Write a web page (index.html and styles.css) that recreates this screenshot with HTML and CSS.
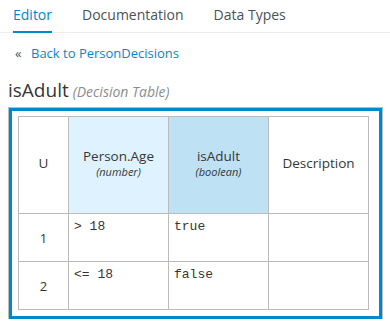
FILE: index.html
```html
<!DOCTYPE html>
<html lang="en">
<head>
    <meta charset="UTF-8">
    <title>isAdult - Decision Table</title>
    <link rel="stylesheet" href="styles.css">
</head>
<body>

<nav class="tabs">
    <a class="tab active">Editor</a>
    <a class="tab">Documentation</a>
    <a class="tab">Data Types</a>
</nav>

<div class="back">
    <span class="back-icon">&laquo;</span>
    <a class="back-link">Back to PersonDecisions</a>
</div>

<h2 class="title">isAdult <span class="kind">(Decision Table)</span></h2>

<div class="grid-box">
    <table class="dtable">
        <colgroup>
            <col class="w-num">
            <col class="w-col">
            <col class="w-col">
            <col class="w-col">
        </colgroup>
        <tr class="head">
            <th>U</th>
            <th class="input">Person.Age<small>(number)</small></th>
            <th class="output">isAdult<small>(boolean)</small></th>
            <th>Description</th>
        </tr>
        <tr>
            <td class="num">1</td>
            <td>&gt; 18</td>
            <td>true</td>
            <td></td>
        </tr>
        <tr>
            <td class="num">2</td>
            <td>&lt;= 18</td>
            <td>false</td>
            <td></td>
        </tr>
    </table>
</div>

</body>
</html>
```

FILE: styles.css
```css
body {
    margin: 0;
    font-family: 'Open Sans', sans-serif;
    color: #363636;
    background: #fff;
}
.tabs {
    display: flex;
    height: 32px;
    border-bottom: 1px solid #ededed;
    padding-left: 13px;
    gap: 30px;
}
.tab {
    font-size: 14px;
    line-height: 30px;
    color: #4d5258;
    border-bottom: 2px solid transparent;
    margin-bottom: -1px;
}
.tab.active {
    color: #0088ce;
    border-bottom-color: #0088ce;
}
.back {
    display: flex;
    align-items: center;
    padding: 10px 0 0 15px;
    height: 20px;
    font-size: 13px;
}
.back-icon {
    color: #4d5258;
    width: 16px;
}
.back-link {
    color: #0088ce;
}
.title {
    display: flex;
    align-items: baseline;
    gap: 4px;
    margin: 15px 0 0 8px;
    height: 24px;
    font-size: 19px;
    font-weight: normal;
    line-height: 24px;
    color: #363636;
}
.kind {
    font-size: 14px;
    font-style: italic;
    color: #8b8d8f;
}
.grid-box {
    margin: 6px 0 0 9px;
    width: 357px;
    border: 3px solid #0088ce;
    outline: 1px solid #bbb;
    padding: 5px 4px 6px 6px;
}
.dtable {
    border-collapse: collapse;
    width: 351px;
    table-layout: fixed;
}
.w-num {
    width: 50px;
}
.w-col {
    width: 100px;
}
.dtable th,
.dtable td {
    border: 1px solid #bbb;
    padding: 0;
}
.dtable th {
    height: 92px;
    padding-bottom: 4px;
    font-size: 13.5px;
    font-weight: normal;
    color: #363636;
    text-align: center;
}
.dtable th small {
    display: block;
    font-size: 11px;
    font-style: italic;
    line-height: 14px;
}
.dtable th.input {
    background: #def3ff;
}
.dtable th.output {
    background: #bee1f4;
}
.dtable td {
    height: 48px;
    vertical-align: top;
    font-family: 'Liberation Mono', monospace;
    font-size: 13px;
    padding: 5px 0 0 5px;
    box-sizing: border-box;
}
.dtable td.num {
    font-family: 'Open Sans', sans-serif;
    text-align: center;
    vertical-align: middle;
    padding: 0;
}
```
